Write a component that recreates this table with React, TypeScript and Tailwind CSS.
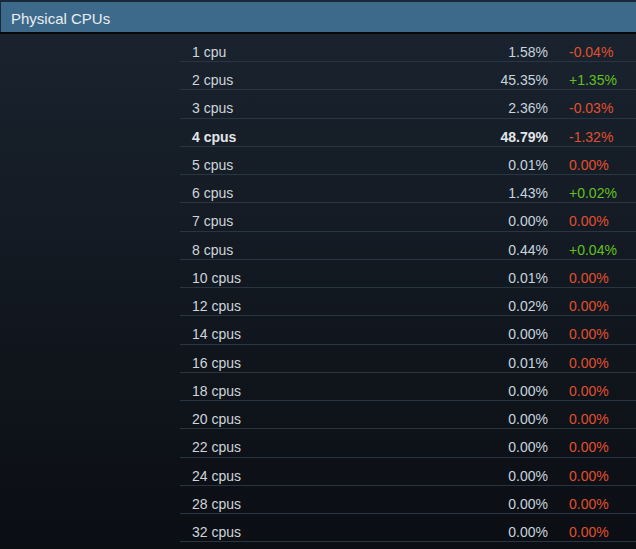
import React from "react";

type Row = { label: string; pct: string; chg: string; up?: boolean; bold?: boolean };

const rows: Row[] = [
  { label: "1 cpu", pct: "1.58%", chg: "-0.04%" },
  { label: "2 cpus", pct: "45.35%", chg: "+1.35%", up: true },
  { label: "3 cpus", pct: "2.36%", chg: "-0.03%" },
  { label: "4 cpus", pct: "48.79%", chg: "-1.32%", bold: true },
  { label: "5 cpus", pct: "0.01%", chg: "0.00%" },
  { label: "6 cpus", pct: "1.43%", chg: "+0.02%", up: true },
  { label: "7 cpus", pct: "0.00%", chg: "0.00%" },
  { label: "8 cpus", pct: "0.44%", chg: "+0.04%", up: true },
  { label: "10 cpus", pct: "0.01%", chg: "0.00%" },
  { label: "12 cpus", pct: "0.02%", chg: "0.00%" },
  { label: "14 cpus", pct: "0.00%", chg: "0.00%" },
  { label: "16 cpus", pct: "0.01%", chg: "0.00%" },
  { label: "18 cpus", pct: "0.00%", chg: "0.00%" },
  { label: "20 cpus", pct: "0.00%", chg: "0.00%" },
  { label: "22 cpus", pct: "0.00%", chg: "0.00%" },
  { label: "24 cpus", pct: "0.00%", chg: "0.00%" },
  { label: "28 cpus", pct: "0.00%", chg: "0.00%" },
  { label: "32 cpus", pct: "0.00%", chg: "0.00%" },
];

export default function App() {
  return (
    <div
      className="w-[636px] h-[549px] overflow-hidden bg-gradient-to-b from-[#1a2430] to-[#0b0e13] text-[14px]"
      style={{ fontFamily: '"Liberation Sans", Arial, sans-serif' }}
    >
      <div className="bg-[#1b2838] pt-[2px] pl-[1px]">
        <div className="h-[30px] bg-[#3d6a8b] pl-[10px] pt-[5px] flex items-center text-[15px] text-[#e9eef2]">
          Physical CPUs
        </div>
      </div>
      <div className="h-[2px] bg-[#05080b]" />
      <div className="ml-[180px]">
        {rows.map((r) => (
          <div
            key={r.label}
            className={`h-[28.24px] border-b border-[#2a3542] flex items-start pt-[10px] leading-[16px] ${
              r.bold ? "font-bold" : ""
            }`}
          >
            <div className={`flex-1 pl-[12px] ${r.bold ? "text-[#e2e6ea]" : "text-[#cfd5da]"}`}>{r.label}</div>
            <div className={`text-right ${r.bold ? "text-[#e2e6ea]" : "text-[#c6d4df]"}`}>{r.pct}</div>
            <div
              className={`w-[67px] ml-[21px] font-normal ${r.up ? "text-[#64c01f]" : "text-[#e1502e]"}`}
            >
              {r.chg}
            </div>
          </div>
        ))}
      </div>
    </div>
  );
}
